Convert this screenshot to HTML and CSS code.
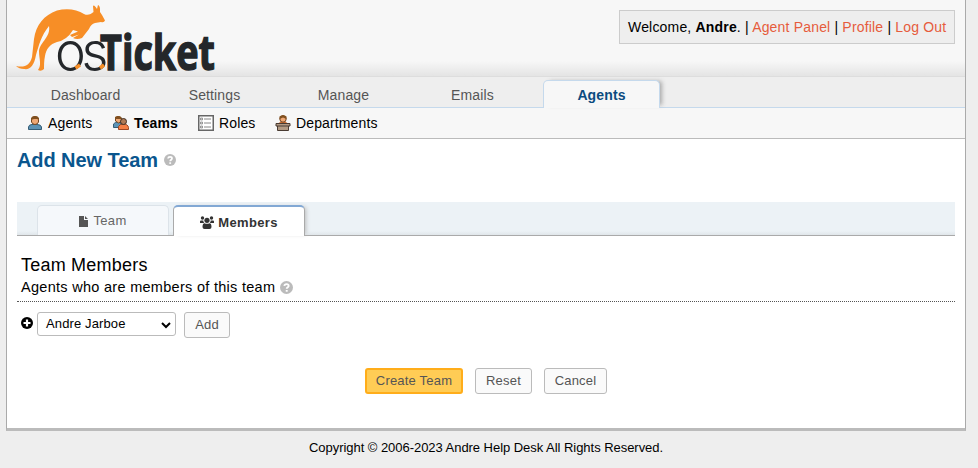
FILE: index.html
```html
<!DOCTYPE html>
<html lang="en">
<head>
<meta charset="utf-8">
<title>Add New Team</title>
<link rel="stylesheet" href="styles.css">
</head>
<body>
<svg width="0" height="0" class="defs">
  <symbol id="help" viewBox="0 0 12 12"><circle cx="6" cy="6" r="6" fill="#bbb"/><path d="M4 4.500C4.200 2.400 8 2.400 8 4.500C8 5.700 6.200 5.800 6.200 7.200" fill="none" stroke="#fff" stroke-width="1.700"/><path d="M5.300 8.300h1.800v1.600H5.300z" fill="#fff"/></symbol>
</svg>
<div class="container">
  <header class="header">
    <svg class="logo" width="210" height="77" viewBox="0 0 210 77">
      <path fill="#f78e26" d="M9 66C18 68 23 65 25 57L27 39C29 25 37 15 50 10.500C59 8 70 9 77 14C81 16 84 14 86.500 12L86 6Q87 4 90 9L91 5Q93.500 6 93 12L95 15L98 20.500Q97 23 94 22L88 23Q84 24 82 29L75 38Q70 40 66 38L72 34.500L65 37L63 35L71 31.500L66 30Q60 40 50 42C43 44 39 49 38 56C37 61 37 65 37 69Q34 72 31 70C35 65 32 59 32 51C33 42 44 37 42 26C34 36 32 45 29 55C27 66 23 70 17 69Q12 69 9 66Z"/>
      <text class="os" x="48 74.500" y="69.500">os</text>
      <text class="ticket" x="93" y="69.500" textLength="115" lengthAdjust="spacingAndGlyphs">Ticket</text>
      <path d="M68.500 68l4.500-3M93 68l4-3" stroke="#f78e26" stroke-width="3.500"/>
    </svg>
    <p class="info">Welcome, <strong>Andre</strong>. | <a>Agent Panel</a> | <a>Profile</a> | <a>Log Out</a></p>
  </header>
  <nav class="nav"><a>Dashboard</a><a>Settings</a><a>Manage</a><a>Emails</a><a class="active">Agents</a></nav>
  <nav class="sub">
    <a class="s1"><svg width="16" height="16"><path d="M1.500 14.500V12Q2 9.500 5 9.500h5q4 0 4.500 2.500v2.500z" fill="#5d93b5" stroke="#355d76"/><path d="M4.500 4.500Q5 1.500 8 1.500t3.500 3V7Q10.500 9.500 8 9.500T4.500 7z" fill="#efa875" stroke="#734620"/><path d="M4 5V3Q5 1 8 1t4 2v2L10 4H7z" fill="#81501f"/></svg><span>Agents</span></a>
    <a class="s2 bold"><svg width="16" height="16"><path d="M.5 12.500V9Q2 7 5 7h3v5.500z" fill="#5d93b5" stroke="#355d76"/><path d="M2.500 3.500Q3 1.500 5.500 1.500T9 4v2L5.500 8 2.500 6z" fill="#efa875" stroke="#734620"/><path d="M2 4V2q3-2 6 0l1 2z" fill="#81501f"/><path d="M5.500 14.500v-3Q7 9 10 9q5 0 5.500 3.500v2z" fill="#f47f45" stroke="#9d4623"/><circle cx="10.500" cy="6.500" r="3" fill="#af7954" stroke="#3e2e24"/></svg><span>Teams</span></a>
    <a class="s3"><svg width="16" height="16"><path d="M.75.75h14.500v14.500H.75z" fill="#fff" stroke="#666" stroke-width="1.500"/><path d="M6 4h7M6 8h7M6 12h7" stroke="#888"/><path d="M2.500 3h2v2h-2zM2.500 7h2v2h-2zM2.500 11h2v2h-2z" fill="#ddd" stroke="#777" stroke-width=".7"/></svg><span>Roles</span></a>
    <a class="s4"><svg width="16" height="16"><path d="M3 9Q4 6.500 8 6.500T13 9z" fill="#d46b2c"/><circle cx="8" cy="4" r="3.200" fill="#efa875" stroke="#734620"/><path d="M4.500 4V1.500q3.500-3 7 0V4L8 2.500z" fill="#81501f"/><path d="M2.500 10.500h11v5h-11z" fill="#b39a83" stroke="#493b32"/><path d="M1 8.500h14v2.500H1z" fill="#b39a83" stroke="#493b32"/></svg><span>Departments</span></a>
  </nav>
  <main class="content">
    <h2><span>Add New Team</span><svg class="help" width="12" height="12"><use href="#help"/></svg></h2>
    <div class="tabs">
      <a class="tab"><svg width="10" height="12"><path d="M0 1h5v4h4v7H0zM6 1l3 3H6z" fill="#555"/></svg><span>Team</span></a>
      <a class="tab on"><svg width="14" height="13" fill="#333"><circle cx="7" cy="4.300" r="2.600"/><circle cx="2.500" cy="2" r="1.700"/><circle cx="11.500" cy="2" r="1.700"/><path d="M0 7V5.500q0-1 1-1h2.300q0 1.500 1 2.500zM14 7V5.500q0-1-1-1h-2.300q0 1.500-1 2.500zM2.500 11q0-3.500 2-3.800 2.500 1.200 5 0 2 .3 2 3.800 0 2-2 2h-5q-2 0-2-2"/></svg><span>Members</span></a>
    </div>
    <section class="intro"><h3>Team Members</h3><p><span>Agents who are members of this team</span><svg class="help" width="13" height="13"><use href="#help"/></svg></p></section>
    <div class="add">
      <svg width="12" height="12"><circle cx="6" cy="6" r="6"/><path d="M6 2.500v7M2.500 6h7" stroke="#fff" stroke-width="2.200"/></svg>
      <div class="select"><span>Andre Jarboe</span><svg width="10" height="7"><path d="M1 1l4 4 4-4" fill="none" stroke="#000" stroke-width="2"/></svg></div>
      <button class="addbtn">Add</button>
    </div>
    <div class="actions"><button class="primary">Create Team</button><button class="reset">Reset</button><button class="cancel">Cancel</button></div>
  </main>
</div>
<footer>Copyright © 2006-2023 Andre Help Desk All Rights Reserved.</footer>
</body>
</html>
```
FILE: styles.css
```css
*{box-sizing:border-box}
body{margin:0;background:#eee;font:14px "Liberation Sans",Arial,sans-serif;color:#000;height:468px;overflow:hidden}
.defs{position:absolute}
svg{display:block;flex:none}
h2,h3,p{margin:0;font-weight:normal}
.container{width:960px;height:431px;margin-left:6px;background:#fff;border:1px solid #aaa;border-top:0;border-bottom:3px solid #bbb}
.header{height:77px;display:flex;justify-content:space-between;align-items:flex-start;background:linear-gradient(#f7f7f7 0,#f7f7f7 61px,#e4e4e4 76px);border-bottom:1px solid #ddd}
.os{font:300 52px Inter,sans-serif;fill:#24272a}
.ticket{font:bold 48px "Open Sans",sans-serif;fill:#24272a;stroke:#24272a;stroke-width:1.4px}
.info{width:336px;height:34px;margin:10px 10px 0 0;padding:0 8px;line-height:32px;border:1px solid #ccc;background:#eee;white-space:nowrap;letter-spacing:.18px}
.info a{color:#e65c3c}
.nav{height:31px;display:flex;align-items:flex-end;padding-left:20px;border-bottom:1px solid #c5d9ec;background:#eee;letter-spacing:.13px}
.nav a{width:117px;height:26px;margin-right:12px;line-height:28px;text-align:center;color:#555}
.nav .active{height:28px;margin-bottom:-1px;border:1px solid #c5d9ec;border-bottom:0;border-radius:5px 5px 0 0;background:#f7f7f7;color:#0a4b80;font-weight:bold;box-shadow:4px -1px 4px -2px #aaa}
.sub{height:31px;display:flex;align-items:center;background:#f7f7f7;border-bottom:1px solid #bbb;padding-left:20px;letter-spacing:.13px}
.sub a{display:flex;align-items:center;gap:5px}
.s1{width:86px}.s2{width:85px}.s3{width:77px}
.bold{font-weight:bold}
.content{padding:9px 10px 0}
h2{height:54px;display:flex;gap:6px;font-size:20px;line-height:24px;font-weight:bold;color:#0a568e;letter-spacing:-.08px}
h2 .help{margin-top:6px}
.tabs{height:34px;display:flex;align-items:flex-end;padding-left:20px;background:linear-gradient(#ecf2f6 29px,#e0e6ea);border-bottom:1px solid #aaa;font-size:13px;letter-spacing:.35px}
.tab{display:flex;align-items:center;justify-content:center;gap:4px;width:132px;height:30px;margin-right:4px;border:1px solid #dce3e9;border-bottom:0;border-radius:5px 5px 0 0;background:#f5f8fb;color:#666}
.on{height:31px;margin-bottom:-1px;padding-top:2px;border-color:#aaa;border-top:2px solid #82a8d4;background:#fff;color:#333;font-weight:bold;box-shadow:3px 0 4px -2px #bbb}
.intro{height:66px;padding:18px 4px 0;border-bottom:1px dotted #555}
h3{font-size:18px;line-height:23px;letter-spacing:.22px}
.intro p{display:flex;align-items:center;gap:5px;font-size:14.5px;line-height:21px;letter-spacing:.29px}
.add{display:flex;margin:10px 0 0 4px}
.add>svg{margin:5px 4px 0 0}
.select{display:flex;justify-content:space-between;width:139px;height:24px;padding:0 4px 0 8px;border:1px solid #bbb;border-radius:3px;line-height:21px;font-size:13px;letter-spacing:.12px}
.select svg{margin-top:9px}
button{height:26px;padding:0;border:1px solid #bbb;border-radius:3px;background:#fafafa;color:#555;font:13px/22px "Liberation Sans",sans-serif;letter-spacing:.2px}
.addbtn{width:46px;margin-left:8px}
.actions{display:flex;gap:12px;margin:30px 0 0 348px}
.primary{width:98px;border:2px solid #ffad1a;background:#ffcc55}
.reset{width:57px}.cancel{width:63px}
footer{text-align:center;width:972px;line-height:34px;font-size:13px;letter-spacing:-.04px}
```
